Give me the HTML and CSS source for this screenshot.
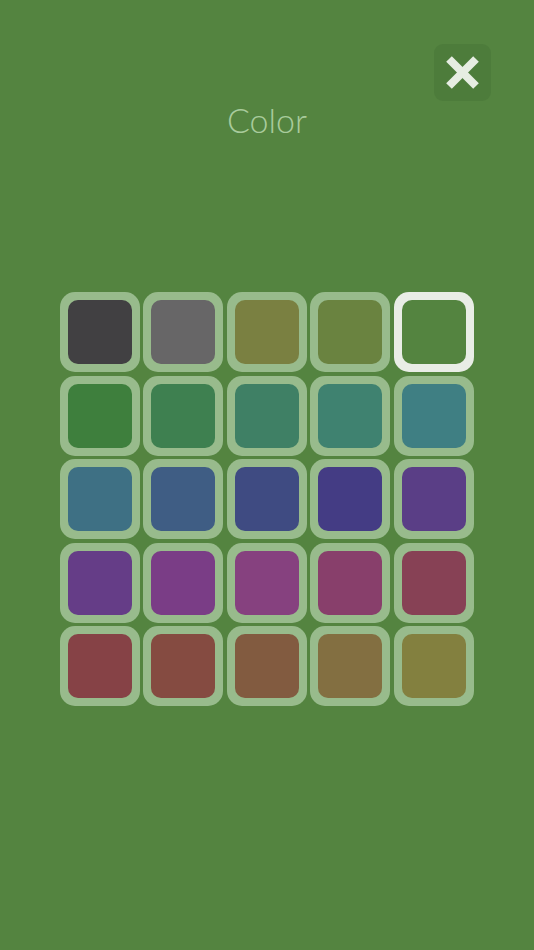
FILE: index.html
```html
<!DOCTYPE html>
<html>
<head>
<meta charset="utf-8">
<link rel="stylesheet" href="styles.css">
</head>
<body>
<div class="screen">
  <div class="topbar">
    <button class="close" aria-label="Close">
      <svg width="57" height="57" viewBox="0 0 57 57"><line x1="15" y1="15" x2="42" y2="42"/><line x1="42" y1="15" x2="15" y2="42"/></svg>
    </button>
  </div>
  <h1 class="title">Color</h1>
  <div class="grid">
    <div class="cell"><div class="swatch c1"></div></div>
    <div class="cell"><div class="swatch c2"></div></div>
    <div class="cell"><div class="swatch c3"></div></div>
    <div class="cell"><div class="swatch c4"></div></div>
    <div class="cell selected"><div class="swatch c5"></div></div>
    <div class="cell"><div class="swatch c6"></div></div>
    <div class="cell"><div class="swatch c7"></div></div>
    <div class="cell"><div class="swatch c8"></div></div>
    <div class="cell"><div class="swatch c9"></div></div>
    <div class="cell"><div class="swatch c10"></div></div>
    <div class="cell"><div class="swatch c11"></div></div>
    <div class="cell"><div class="swatch c12"></div></div>
    <div class="cell"><div class="swatch c13"></div></div>
    <div class="cell"><div class="swatch c14"></div></div>
    <div class="cell"><div class="swatch c15"></div></div>
    <div class="cell"><div class="swatch c16"></div></div>
    <div class="cell"><div class="swatch c17"></div></div>
    <div class="cell"><div class="swatch c18"></div></div>
    <div class="cell"><div class="swatch c19"></div></div>
    <div class="cell"><div class="swatch c20"></div></div>
    <div class="cell"><div class="swatch c21"></div></div>
    <div class="cell"><div class="swatch c22"></div></div>
    <div class="cell"><div class="swatch c23"></div></div>
    <div class="cell"><div class="swatch c24"></div></div>
    <div class="cell"><div class="swatch c25"></div></div>
  </div>
</div>
</body>
</html>
```
FILE: styles.css
```css
html, body {
  margin: 0;
  padding: 0;
  background: #548440;
}
.screen {
  width: 534px;
  height: 950px;
  background: #548440;
  display: flex;
  flex-direction: column;
  align-items: center;
}
.topbar {
  width: 100%;
  box-sizing: border-box;
  display: flex;
  justify-content: flex-end;
  padding: 44px 43px 0 0;
}
.close {
  width: 57px;
  height: 57px;
  padding: 0;
  margin: 0;
  border: none;
  border-radius: 9px;
  background: #4d7c3b;
  display: block;
}
.close svg {
  display: block;
}
.close line {
  stroke: #e6ede2;
  stroke-width: 8;
}
.title {
  margin: 0;
  font-family: Lato, "Open Sans", sans-serif;
  font-weight: 300;
  font-size: 34px;
  line-height: 36px;
  color: #a8cb9c;
  letter-spacing: 0;
  padding-top: 1px;
  height: 35px;
}
.grid {
  margin-top: 155px;
  display: grid;
  grid-template-columns: repeat(5, 80px);
  grid-auto-rows: 80px;
  column-gap: 3.5px;
  row-gap: 3.5px;
  margin-right: 1px;
}
.cell {
  background: #98bb8c;
  border-radius: 15px;
  padding: 8px;
  box-sizing: border-box;
}
.cell.selected {
  background: #e9ede6;
}
.swatch {
  width: 100%;
  height: 100%;
  border-radius: 10px;
}
.c1 { background: #414042; }
.c2 { background: #676667; }
.c3 { background: #7a8041; }
.c4 { background: #6a8340; }
.c5 { background: #548440; }
.c6 { background: #3e7f3d; }
.c7 { background: #3e8050; }
.c8 { background: #3f8065; }
.c9 { background: #3f8270; }
.c10 { background: #3f7f83; }
.c11 { background: #3e7084; }
.c12 { background: #3f5d84; }
.c13 { background: #3f4b82; }
.c14 { background: #443c84; }
.c15 { background: #5a3e86; }
.c16 { background: #653d87; }
.c17 { background: #7a3d86; }
.c18 { background: #86417f; }
.c19 { background: #883f6b; }
.c20 { background: #874155; }
.c21 { background: #864246; }
.c22 { background: #854b41; }
.c23 { background: #825b40; }
.c24 { background: #836f41; }
.c25 { background: #83803f; }
```
